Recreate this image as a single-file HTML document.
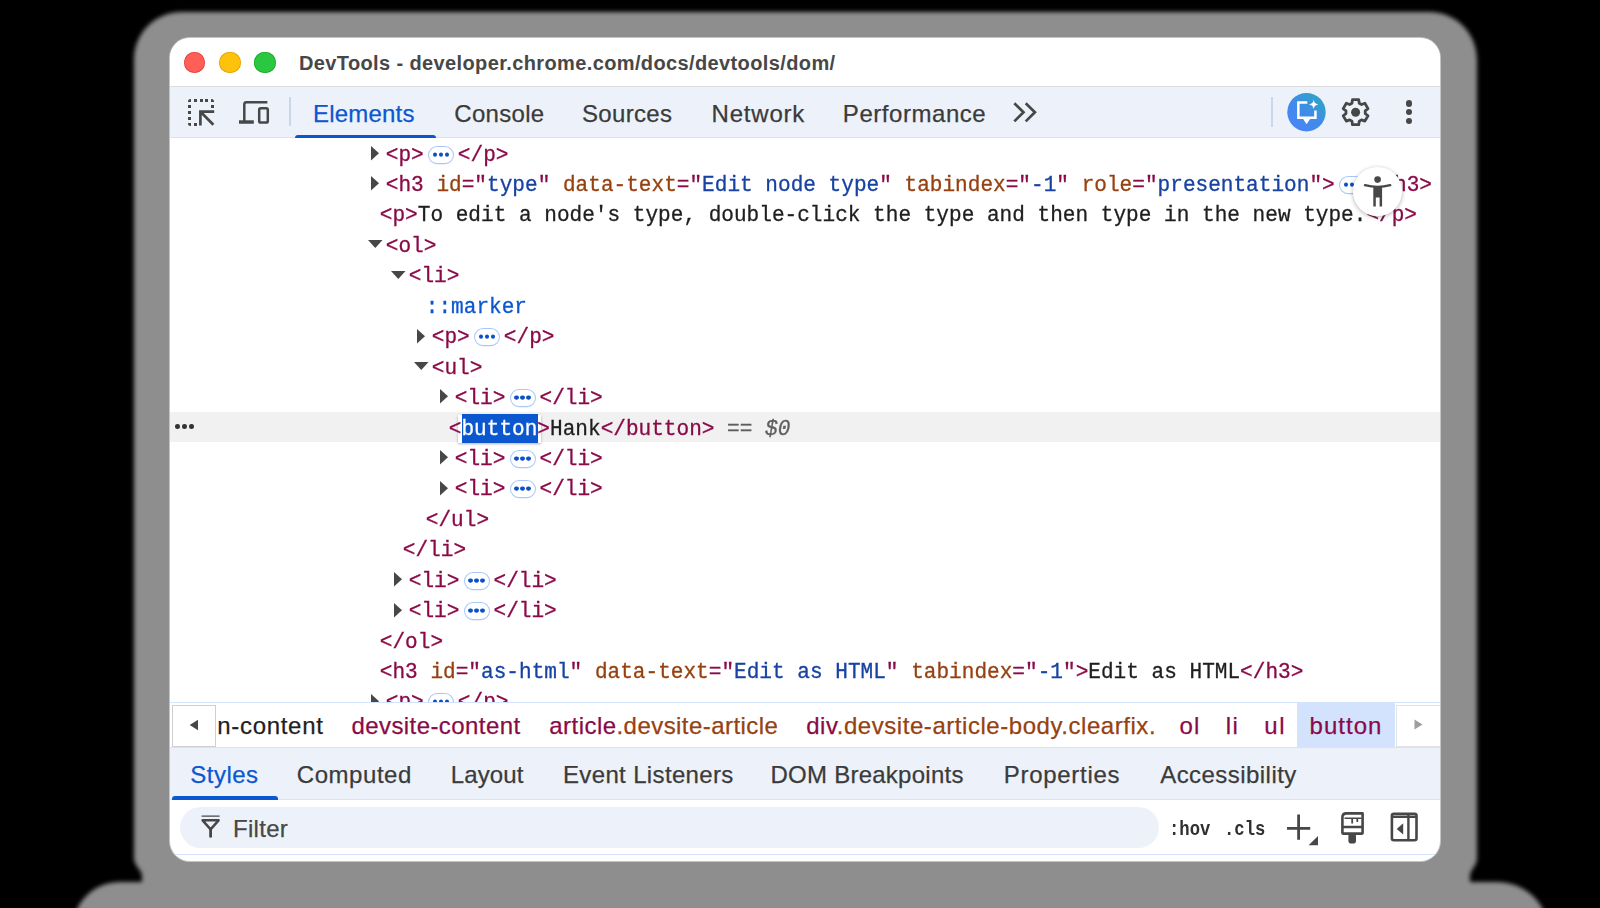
<!DOCTYPE html><html><head><meta charset="utf-8"><style>
*{box-sizing:border-box;margin:0;padding:0}
html,body{width:1600px;height:908px;overflow:hidden;background:#000}
body{position:relative;font-family:"Liberation Sans",sans-serif}
#shadow{position:absolute;left:0;top:0}
#win{position:absolute;left:170px;top:38px;width:1270px;height:823px;border-radius:20px;background:#fff;overflow:hidden;box-shadow:0 0 0 1px #c4c4c4}
.s{position:absolute;white-space:pre;line-height:1.117em;font-family:"Liberation Sans",sans-serif}
.m{position:absolute;white-space:pre;line-height:1.1325em;font-family:"Liberation Mono",monospace;-webkit-text-stroke:0.3px currentColor}
.sy{transform:scaleY(1.07);transform-origin:0 17.53px}
.bx{position:absolute}
.bd{display:inline-block;position:relative;width:26.4px;height:17.477px;margin:0 3.4px 0 4.3px;border:1.4px solid #a8c7fa;border-top-width:1.308px;border-bottom-width:1.308px;border-radius:9.35px/8.738px;vertical-align:-3.458px;background:#fff;-webkit-text-stroke:0}
.bd i{position:absolute;top:5.421px;width:4.3px;height:4.019px;border-radius:50%;background:#0b50c8}
.bd i:nth-child(1){left:3.6px} .bd i:nth-child(2){left:9.6px} .bd i:nth-child(3){left:15.6px}
</style></head><body>
<svg id="shadow" width="1600" height="908" viewBox="0 0 1600 908">
<defs><filter id="bl" x="-5%" y="-5%" width="110%" height="110%"><feGaussianBlur stdDeviation="2.2"/></filter></defs>
<path filter="url(#bl)" fill="#8e8e8e" d="M182 12 H1429 C1456 12 1477 33 1477 60 V858 C1477 866 1470 870 1470 876 V882 H1496 C1520 882 1538 896 1544 912 H76 C82 896 98 882 120 882 H142 V876 C142 870 134 866 134 858 V60 C134 33 155 12 182 12 Z"/>
</svg>
<div id="win">
<div class="bx" style="left:0;top:0;width:1270px;height:49px;background:#fff;border-bottom:1px solid #dcdcdc"></div>
<div class="bx" style="left:13.75px;top:13.75px;width:21.5px;height:21.5px;border-radius:50%;background:#ff5f57;box-shadow:inset 0 0 0 0.8px #e2463f"></div>
<div class="bx" style="left:49.25px;top:13.75px;width:21.5px;height:21.5px;border-radius:50%;background:#fec10c;box-shadow:inset 0 0 0 0.8px #e0a70a"></div>
<div class="bx" style="left:84.25px;top:13.75px;width:21.5px;height:21.5px;border-radius:50%;background:#2ac840;box-shadow:inset 0 0 0 0.8px #1dad2b"></div>
<div class="s" style="left:128.96px;top:13.90px;font-size:20px;color:#474747;letter-spacing:0.38px;font-weight:bold;">DevTools - developer.chrome.com/docs/devtools/dom/</div>
<div class="bx" style="left:0;top:49px;width:1270px;height:51px;background:#edf2fa;border-bottom:1px solid #d3e3fd"></div>
<svg class="bx" style="left:14.00px;top:57.00px;" width="34" height="34" viewBox="184 95 34 34"><g fill="#474747" shape-rendering="crispEdges"><rect x="194" y="99" width="3" height="3"/><rect x="199.5" y="99" width="3" height="3"/><rect x="205" y="99" width="3" height="3"/><rect x="188" y="105" width="3" height="3"/><rect x="188" y="111" width="3" height="3"/><rect x="188" y="117" width="3" height="3"/><rect x="211" y="105" width="3" height="3"/><rect x="194" y="123" width="3" height="3"/></g>
<path d="M188 102 V101.5 Q188 99 190.5 99 H191 V102Z M214 102 V101.5 Q214 99 211.5 99 H211 V102Z M188 123 V123.5 Q188 126 190.5 126 H191 V123Z" fill="#474747"/>
<path d="M214.2 111.7 H200.4 V125.6 M201 112.3 L213.4 124.7" stroke="#474747" stroke-width="2.7" fill="none"/></svg>
<svg class="bx" style="left:66.00px;top:58.00px;" width="36" height="32" viewBox="236 96 36 32"><path d="M244.3 121 V104.5 Q244.3 102.3 246.5 102.3 H267.4" stroke="#474747" stroke-width="2.5" fill="none"/>
<rect x="239" y="120.3" width="14.8" height="3.45" fill="#474747"/>
<rect x="259.2" y="108.15" width="8.6" height="14.4" rx="1.6" stroke="#474747" stroke-width="2.5" fill="none"/></svg>
<div class="bx" style="left:119px;top:59px;width:1.5px;height:29px;background:#c9d6ee"></div>
<div class="s" style="left:143.03px;top:62.78px;font-size:24px;color:#0b57d0;letter-spacing:0.2px;-webkit-text-stroke:0.25px #0b57d0;">Elements</div>
<div class="s" style="left:284.28px;top:62.78px;font-size:24px;color:#3b3b3b;letter-spacing:0.3px;-webkit-text-stroke:0.25px #3b3b3b;">Console</div>
<div class="s" style="left:411.91px;top:62.78px;font-size:24px;color:#3b3b3b;letter-spacing:0.35px;-webkit-text-stroke:0.25px #3b3b3b;">Sources</div>
<div class="s" style="left:541.53px;top:62.78px;font-size:24px;color:#3b3b3b;letter-spacing:0.8px;-webkit-text-stroke:0.25px #3b3b3b;">Network</div>
<div class="s" style="left:672.83px;top:62.78px;font-size:24px;color:#3b3b3b;letter-spacing:0.55px;-webkit-text-stroke:0.25px #3b3b3b;">Performance</div>
<div class="bx" style="left:124.5px;top:97px;width:141.5px;height:3.5px;background:#0b57d0;border-radius:3px 3px 0 0"></div>
<svg class="bx" style="left:835.00px;top:58.00px;" width="40" height="32" viewBox="1005 96 40 32"><path d="M1015.3 104.2 L1023.5 112.3 L1015.3 120.4 M1026.7 104.2 L1034.9 112.3 L1026.7 120.4" stroke="#474747" stroke-width="2.7" fill="none" stroke-linecap="square"/></svg>
<div class="bx" style="left:1101px;top:59px;width:1.5px;height:30px;background:#c9d6ee"></div>
<svg class="bx" style="left:1115.00px;top:52.00px;" width="44" height="44" viewBox="1285 90 44 44"><defs><linearGradient id="ai" x1="0.85" y1="0.1" x2="0.2" y2="0.9"><stop offset="0" stop-color="#2ea3c7"/><stop offset="0.55" stop-color="#408bea"/><stop offset="1" stop-color="#4a85f6"/></linearGradient></defs>
<circle cx="1306.5" cy="112.2" r="19.2" fill="url(#ai)"/>
<path d="M1307.3 102.45 H1298.35 V117.75 H1315.45 V110.6" stroke="#fff" stroke-width="2.5" fill="none" stroke-linejoin="miter"/>
<path d="M1301.8 117 H1311.4 L1306.6 124.2Z" fill="#fff"/>
<path d="M1313.7 99.6 C1314.2 102.6 1315.1 103.6 1318.4 104.4 C1315.1 105.2 1314.2 106.2 1313.7 109.2 C1313.2 106.2 1312.3 105.2 1309 104.4 C1312.3 103.6 1313.2 102.6 1313.7 99.6Z" fill="#fff"/></svg>
<svg class="bx" style="left:1168.00px;top:56.00px;" width="36" height="36" viewBox="1338 94 36 36"><path d="M1351.97 103.21 L1352.48 99.68 L1358.72 99.68 L1359.23 103.21 L1361.57 104.56 L1364.88 103.24 L1368.00 108.64 L1365.21 110.85 L1365.21 113.55 L1368.00 115.76 L1364.88 121.16 L1361.57 119.84 L1359.23 121.19 L1358.72 124.72 L1352.48 124.72 L1351.97 121.19 L1349.63 119.84 L1346.32 121.16 L1343.20 115.76 L1345.99 113.55 L1345.99 110.85 L1343.20 108.64 L1346.32 103.24 L1349.63 104.56Z" stroke="#474747" stroke-width="2.8" fill="none" stroke-linejoin="round"/><circle cx="1355.6" cy="112.2" r="4.5" fill="#474747"/></svg>
<div class="bx" style="left:1236.10px;top:62.30px;width:6.4px;height:6.4px;border-radius:50%;background:#474747"></div>
<div class="bx" style="left:1236.10px;top:71.00px;width:6.4px;height:6.4px;border-radius:50%;background:#474747"></div>
<div class="bx" style="left:1236.10px;top:79.60px;width:6.4px;height:6.4px;border-radius:50%;background:#474747"></div>
<div class="bx" style="left:0;top:100px;width:1270px;height:564px;overflow:hidden;background:#fff">
<svg class="bx" style="left:201.30px;top:7.95px" width="9" height="15" viewBox="0 0 9 15"><path d="M0 0 L8 7.25 L0 14.5Z" fill="#474747"/></svg>
<div class="m sy" style="left:215.80px;top:5.55px;font-size:21.08px"><span style="color:#8a0a48">&lt;p&gt;</span><span class="bd"><i></i><i></i><i></i></span><span style="color:#8a0a48">&lt;/p&gt;</span></div>
<svg class="bx" style="left:201.30px;top:38.39px" width="9" height="15" viewBox="0 0 9 15"><path d="M0 0 L8 7.25 L0 14.5Z" fill="#474747"/></svg>
<div class="m sy" style="left:215.80px;top:35.99px;font-size:21.08px"><span style="color:#8a0a48">&lt;h3 </span><span style="color:#974110">id</span><span style="color:#8a0a48">="</span><span style="color:#1842a2">type</span><span style="color:#8a0a48">" </span><span style="color:#974110">data-text</span><span style="color:#8a0a48">="</span><span style="color:#1842a2">Edit node type</span><span style="color:#8a0a48">" </span><span style="color:#974110">tabindex</span><span style="color:#8a0a48">="</span><span style="color:#1842a2">-1</span><span style="color:#8a0a48">" </span><span style="color:#974110">role</span><span style="color:#8a0a48">="</span><span style="color:#1842a2">presentation</span><span style="color:#8a0a48">"&gt;</span><span class="bd"><i></i><i></i><i></i></span><span style="color:#8a0a48">&lt;/h3&gt;</span></div>
<div class="m sy" style="left:209.80px;top:66.43px;font-size:21.08px"><span style="color:#8a0a48">&lt;p&gt;</span><span style="color:#1f1f1f">To edit a node's type, double-click the type and then type in the new type.</span><span style="color:#8a0a48">&lt;/p&gt;</span></div>
<svg class="bx" style="left:198.00px;top:102.42px" width="15" height="9" viewBox="0 0 15 9"><path d="M0 0 L14.5 0 L7.25 8Z" fill="#474747"/></svg>
<div class="m sy" style="left:215.80px;top:96.87px;font-size:21.08px"><span style="color:#8a0a48">&lt;ol&gt;</span></div>
<svg class="bx" style="left:221.00px;top:132.86px" width="15" height="9" viewBox="0 0 15 9"><path d="M0 0 L14.5 0 L7.25 8Z" fill="#474747"/></svg>
<div class="m sy" style="left:238.80px;top:127.31px;font-size:21.08px"><span style="color:#8a0a48">&lt;li&gt;</span></div>
<div class="m sy" style="left:255.80px;top:157.75px;font-size:21.08px"><span style="color:#0b57d0">::marker</span></div>
<svg class="bx" style="left:247.30px;top:190.59px" width="9" height="15" viewBox="0 0 9 15"><path d="M0 0 L8 7.25 L0 14.5Z" fill="#474747"/></svg>
<div class="m sy" style="left:261.80px;top:188.19px;font-size:21.08px"><span style="color:#8a0a48">&lt;p&gt;</span><span class="bd"><i></i><i></i><i></i></span><span style="color:#8a0a48">&lt;/p&gt;</span></div>
<svg class="bx" style="left:244.00px;top:224.18px" width="15" height="9" viewBox="0 0 15 9"><path d="M0 0 L14.5 0 L7.25 8Z" fill="#474747"/></svg>
<div class="m sy" style="left:261.80px;top:218.63px;font-size:21.08px"><span style="color:#8a0a48">&lt;ul&gt;</span></div>
<svg class="bx" style="left:270.30px;top:251.47px" width="9" height="15" viewBox="0 0 9 15"><path d="M0 0 L8 7.25 L0 14.5Z" fill="#474747"/></svg>
<div class="m sy" style="left:284.80px;top:249.07px;font-size:21.08px"><span style="color:#8a0a48">&lt;li&gt;</span><span class="bd"><i></i><i></i><i></i></span><span style="color:#8a0a48">&lt;/li&gt;</span></div>
<div class="bx" style="left:0;top:273.96px;width:1270px;height:30.4px;background:#f1f1f1"></div>
<div class="bx" style="left:5.05px;top:286.45px;width:4.7px;height:4.7px;border-radius:50%;background:#333"></div>
<div class="bx" style="left:12.00px;top:286.45px;width:4.7px;height:4.7px;border-radius:50%;background:#333"></div>
<div class="bx" style="left:18.95px;top:286.45px;width:4.7px;height:4.7px;border-radius:50%;background:#333"></div>
<div class="bx" style="left:288px;top:277px;width:83px;height:27.5px;background:#fff;box-shadow:0 1px 2.5px rgba(0,0,0,.3)"></div>
<div class="bx" style="left:291.5px;top:276px;width:76px;height:28.5px;background:#0b57d0"></div>
<div class="m sy" style="left:278.80px;top:279.51px;font-size:21.08px"><span style="color:#8a0a48">&lt;</span><span style="color:#fff">button</span><span style="color:#8a0a48">&gt;</span><span style="color:#1f1f1f">Hank</span><span style="color:#8a0a48">&lt;/button&gt;</span><span style="color:#5e5e5e"> == </span><span style="color:#5e5e5e;font-style:italic">$0</span></div>
<svg class="bx" style="left:270.30px;top:312.35px" width="9" height="15" viewBox="0 0 9 15"><path d="M0 0 L8 7.25 L0 14.5Z" fill="#474747"/></svg>
<div class="m sy" style="left:284.80px;top:309.95px;font-size:21.08px"><span style="color:#8a0a48">&lt;li&gt;</span><span class="bd"><i></i><i></i><i></i></span><span style="color:#8a0a48">&lt;/li&gt;</span></div>
<svg class="bx" style="left:270.30px;top:342.79px" width="9" height="15" viewBox="0 0 9 15"><path d="M0 0 L8 7.25 L0 14.5Z" fill="#474747"/></svg>
<div class="m sy" style="left:284.80px;top:340.39px;font-size:21.08px"><span style="color:#8a0a48">&lt;li&gt;</span><span class="bd"><i></i><i></i><i></i></span><span style="color:#8a0a48">&lt;/li&gt;</span></div>
<div class="m sy" style="left:255.80px;top:370.83px;font-size:21.08px"><span style="color:#8a0a48">&lt;/ul&gt;</span></div>
<div class="m sy" style="left:232.80px;top:401.27px;font-size:21.08px"><span style="color:#8a0a48">&lt;/li&gt;</span></div>
<svg class="bx" style="left:224.30px;top:434.11px" width="9" height="15" viewBox="0 0 9 15"><path d="M0 0 L8 7.25 L0 14.5Z" fill="#474747"/></svg>
<div class="m sy" style="left:238.80px;top:431.71px;font-size:21.08px"><span style="color:#8a0a48">&lt;li&gt;</span><span class="bd"><i></i><i></i><i></i></span><span style="color:#8a0a48">&lt;/li&gt;</span></div>
<svg class="bx" style="left:224.30px;top:464.55px" width="9" height="15" viewBox="0 0 9 15"><path d="M0 0 L8 7.25 L0 14.5Z" fill="#474747"/></svg>
<div class="m sy" style="left:238.80px;top:462.15px;font-size:21.08px"><span style="color:#8a0a48">&lt;li&gt;</span><span class="bd"><i></i><i></i><i></i></span><span style="color:#8a0a48">&lt;/li&gt;</span></div>
<div class="m sy" style="left:209.80px;top:492.59px;font-size:21.08px"><span style="color:#8a0a48">&lt;/ol&gt;</span></div>
<div class="m sy" style="left:209.80px;top:523.03px;font-size:21.08px"><span style="color:#8a0a48">&lt;h3 </span><span style="color:#974110">id</span><span style="color:#8a0a48">="</span><span style="color:#1842a2">as-html</span><span style="color:#8a0a48">" </span><span style="color:#974110">data-text</span><span style="color:#8a0a48">="</span><span style="color:#1842a2">Edit as HTML</span><span style="color:#8a0a48">" </span><span style="color:#974110">tabindex</span><span style="color:#8a0a48">="</span><span style="color:#1842a2">-1</span><span style="color:#8a0a48">"&gt;</span><span style="color:#1f1f1f">Edit as HTML</span><span style="color:#8a0a48">&lt;/h3&gt;</span></div>
<svg class="bx" style="left:201.30px;top:555.87px" width="9" height="15" viewBox="0 0 9 15"><path d="M0 0 L8 7.25 L0 14.5Z" fill="#474747"/></svg>
<div class="m sy" style="left:215.80px;top:553.47px;font-size:21.08px"><span style="color:#8a0a48">&lt;p&gt;</span><span class="bd"><i></i><i></i><i></i></span><span style="color:#8a0a48">&lt;/p&gt;</span></div>
</div>
<div class="bx" style="left:1183.2px;top:129.2px;width:48.6px;height:48.6px;border-radius:50%;background:#fff;box-shadow:0 1px 4px rgba(0,0,0,.3)"></div>
<svg class="bx" style="left:1190.00px;top:134.00px;" width="36" height="38" viewBox="1360 172 36 38"><circle cx="1377.6" cy="179.6" r="3.3" fill="#474747"/>
<path d="M1365 185.2 Q1377.6 188.6 1390.2 185.2" stroke="#474747" stroke-width="2.4" fill="none" stroke-linecap="round"/>
<path d="M1373.3 186.6 H1382.1 V206.4 H1379.6 V197.4 H1375.8 V206.4 H1373.3Z" fill="#474747"/></svg>
<div class="bx" style="left:0;top:664px;width:1270px;height:46px;background:#fff;border-top:1px solid #d3e3fd;border-bottom:1px solid #d3e3fd"></div>
<div class="s" style="left:47.21px;top:674.78px;font-size:24px;letter-spacing:0.7px;-webkit-text-stroke:0.25px currentColor"><span style="color:#1f1f1f">n-content</span></div>
<div class="bx" style="left:2px;top:666.5px;width:44px;height:42px;background:#fff;border:1.5px solid #cfcfcf"></div>
<svg class="bx" style="left:16.00px;top:678.00px;" width="16" height="18" viewBox="186 716 16 18"><path d="M189.7 725 L198 719.7 V730.3Z" fill="#474747"/></svg>
<div class="s" style="left:181.40px;top:674.78px;font-size:24px;letter-spacing:0.43px;-webkit-text-stroke:0.25px currentColor"><span style="color:#8a0a48">devsite-content</span></div>
<div class="s" style="left:379.30px;top:674.78px;font-size:24px;letter-spacing:0.45px;-webkit-text-stroke:0.25px currentColor"><span style="color:#8a0a48">article</span><span style="color:#974110">.devsite-article</span></div>
<div class="s" style="left:636.20px;top:674.78px;font-size:24px;letter-spacing:0.55px;-webkit-text-stroke:0.25px currentColor"><span style="color:#8a0a48">div</span><span style="color:#974110">.devsite-article-body.clearfix.</span></div>
<div class="bx" style="left:1127px;top:664.5px;width:97.5px;height:45px;background:#d3e3fd"></div>
<div class="s" style="left:1009.50px;top:674.78px;font-size:24px;letter-spacing:1.2px;-webkit-text-stroke:0.25px currentColor"><span style="color:#8a0a48">ol</span></div>
<div class="s" style="left:1055.70px;top:674.78px;font-size:24px;letter-spacing:1.6px;-webkit-text-stroke:0.25px currentColor"><span style="color:#8a0a48">li</span></div>
<div class="s" style="left:1094.20px;top:674.78px;font-size:24px;letter-spacing:1.6px;-webkit-text-stroke:0.25px currentColor"><span style="color:#8a0a48">ul</span></div>
<div class="s" style="left:1139.60px;top:674.78px;font-size:24px;letter-spacing:1.0px;-webkit-text-stroke:0.25px currentColor"><span style="color:#8a0a48">button</span></div>
<div class="bx" style="left:1225.5px;top:666.5px;width:46px;height:42px;background:#fff;border:1.5px solid #e3e3e3"></div>
<svg class="bx" style="left:1240.00px;top:678.00px;" width="16" height="18" viewBox="1410 716 16 18"><path d="M1422.5 724.5 L1414.5 719.5 V729.5Z" fill="#9e9e9e"/></svg>
<div class="bx" style="left:0;top:710px;width:1270px;height:52px;background:#edf2fa;border-bottom:1px solid #d3e3fd"></div>
<div class="s" style="left:20.21px;top:724.48px;font-size:24px;color:#0b57d0;letter-spacing:0.5px;-webkit-text-stroke:0.25px #0b57d0;">Styles</div>
<div class="s" style="left:126.78px;top:724.48px;font-size:24px;color:#3b3b3b;letter-spacing:0.55px;-webkit-text-stroke:0.25px #3b3b3b;">Computed</div>
<div class="s" style="left:280.83px;top:724.48px;font-size:24px;color:#3b3b3b;letter-spacing:0.1px;-webkit-text-stroke:0.25px #3b3b3b;">Layout</div>
<div class="s" style="left:393.03px;top:724.48px;font-size:24px;color:#3b3b3b;letter-spacing:0.35px;-webkit-text-stroke:0.25px #3b3b3b;">Event Listeners</div>
<div class="s" style="left:600.53px;top:724.48px;font-size:24px;color:#3b3b3b;letter-spacing:0.25px;-webkit-text-stroke:0.25px #3b3b3b;">DOM Breakpoints</div>
<div class="s" style="left:833.83px;top:724.48px;font-size:24px;color:#3b3b3b;letter-spacing:0.7px;-webkit-text-stroke:0.25px #3b3b3b;">Properties</div>
<div class="s" style="left:990.20px;top:724.48px;font-size:24px;color:#3b3b3b;letter-spacing:0.45px;-webkit-text-stroke:0.25px #3b3b3b;">Accessibility</div>
<div class="bx" style="left:2px;top:758px;width:105.5px;height:3.8px;background:#0b57d0;border-radius:3px 3px 0 0"></div>
<div class="bx" style="left:10px;top:769px;width:979px;height:41px;border-radius:20.5px;background:#edf2fa"></div>
<svg class="bx" style="left:28.00px;top:774.00px;" width="26" height="30" viewBox="198 812 26 30"><path d="M201.6 816.2 H219.6" stroke="#474747" stroke-width="1.3"/>
<path d="M202.6 820.3 H218.6 L210.6 829.3Z" stroke="#474747" stroke-width="2.5" fill="none" stroke-linejoin="round"/>
<path d="M210.6 828.5 V836.4" stroke="#474747" stroke-width="2.8" stroke-linecap="round"/></svg>
<div class="s" style="left:63.03px;top:778.08px;font-size:24px;color:#474747;letter-spacing:0.3px;-webkit-text-stroke:0.25px #474747;">Filter</div>
<div class="m" style="left:999.30px;top:780.42px;font-size:21px;font-weight:bold;color:#303030;transform:scaleX(0.82);transform-origin:0 0;-webkit-text-stroke:0">:hov</div>
<div class="m" style="left:1054.10px;top:780.42px;font-size:21px;font-weight:bold;color:#303030;transform:scaleX(0.82);transform-origin:0 0;-webkit-text-stroke:0">.cls</div>
<svg class="bx" style="left:1114.00px;top:773.00px;" width="38" height="38" viewBox="1284 811 38 38"><path d="M1298.6 814.4 V839.7 M1287 828.4 H1310.2" stroke="#474747" stroke-width="2.8"/>
<path d="M1318 836 V845.3 H1308.6Z" fill="#474747"/></svg>
<svg class="bx" style="left:1168.00px;top:771.00px;" width="30" height="38" viewBox="1338 809 30 38"><path d="M1342.4 826.5 V817.5 Q1342.4 813.4 1346.5 813.4 H1362.6 V832.4 Q1362.6 833.6 1361.4 833.6 H1343.6 Q1342.4 833.6 1342.4 832.4Z" stroke="#474747" stroke-width="2.6" fill="none" stroke-linejoin="round"/>
<path d="M1342.4 827 H1362.6" stroke="#474747" stroke-width="2.4"/>
<path d="M1344.5 818.3 H1361.5" stroke="#474747" stroke-width="1.5"/>
<path d="M1352.2 818 V823.5 M1357.3 818 V822" stroke="#474747" stroke-width="1.8"/>
<rect x="1348.4" y="833" width="7.6" height="10.6" rx="3.2" fill="#474747"/></svg>
<svg class="bx" style="left:1218.00px;top:772.00px;" width="32" height="34" viewBox="1388 810 32 34"><rect x="1391.9" y="813.8" width="24.6" height="26.4" rx="2" stroke="#474747" stroke-width="2.6" fill="none"/>
<path d="M1408.4 814 V840 M1392 816.8 H1416.4" stroke="#474747" stroke-width="2.4"/>
<path d="M1396.7 828.9 L1403.2 823.3 V834.5Z" fill="#474747"/></svg>
<div class="bx" style="left:0;top:815.5px;width:1270px;height:1.2px;background:#d3e3fd"></div>
</div></body></html>
